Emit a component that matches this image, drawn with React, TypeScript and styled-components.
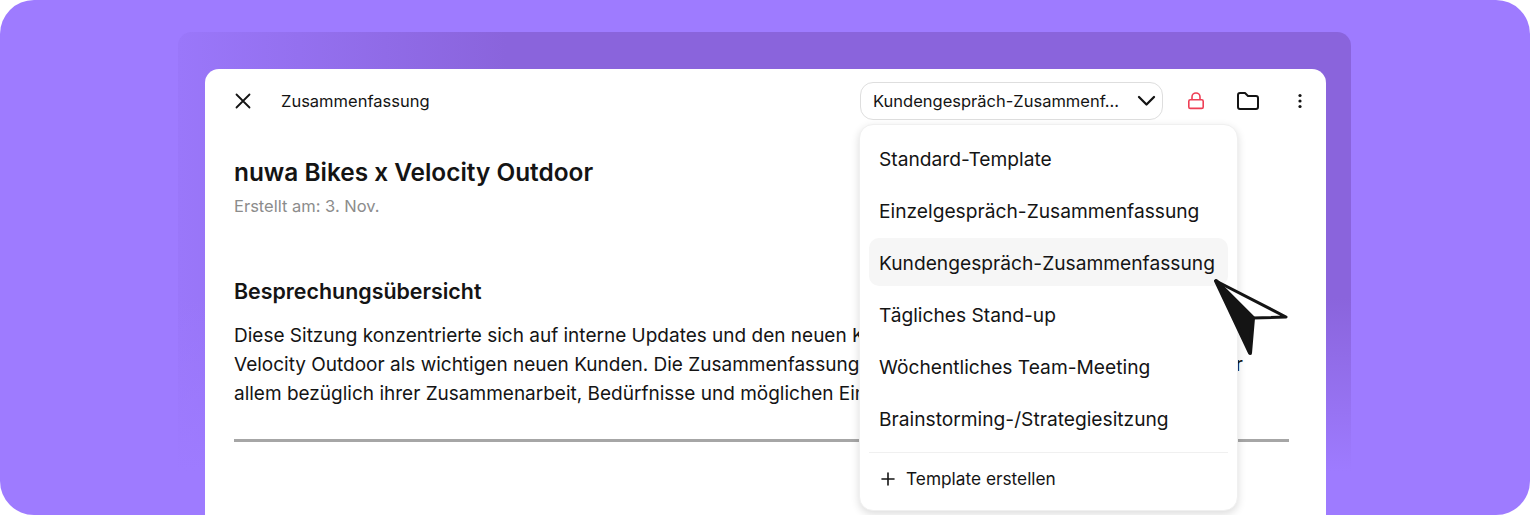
import React from 'react';
import styled, { createGlobalStyle } from 'styled-components';

const GlobalStyle = createGlobalStyle`
    html, body {
        margin: 0;
        padding: 0;
        background: #fff;
    }
    body {
        font-family: 'Inter', 'Liberation Sans', sans-serif;
        color: #141414;
        overflow: hidden;
    }
`;

const templates = [
    'Standard-Template',
    'Einzelgespräch-Zusammenfassung',
    'Kundengespräch-Zusammenfassung',
    'Tägliches Stand-up',
    'Wöchentliches Team-Meeting',
    'Brainstorming-/Strategiesitzung',
];

const App = () => {
    return (
        <>
            <GlobalStyle />
            <Stage>
                <Halo>
                    <Sheet>
                        <TopBar>
                            <CloseButton>
                                <svg width="18" height="18" viewBox="0 0 18 18" fill="none" stroke="#141414" strokeWidth="1.8" strokeLinecap="round">
                                    <path d="M2.5 2.5l13 13M15.5 2.5l-13 13" />
                                </svg>
                            </CloseButton>
                            <BarTitle>Zusammenfassung</BarTitle>
                            <Select>
                                <SelectText>Kundengespräch-Zusammenf…</SelectText>
                                <svg width="19" height="12" viewBox="0 0 19 12" fill="none" stroke="#141414" strokeWidth="2.3" strokeLinecap="round" strokeLinejoin="round">
                                    <path d="M2 2l7.5 7.5L17 2" />
                                </svg>
                            </Select>
                            <IconSlot>
                                <svg width="18" height="18" viewBox="0 0 18 18" fill="none" stroke="#ee3f55" strokeWidth="1.6" strokeLinejoin="round">
                                    <rect x="1.8" y="7.8" width="14.4" height="8.6" rx="1.5" />
                                    <path d="M5 7.8V5a4 4 0 0 1 8 0v2.8" />
                                </svg>
                            </IconSlot>
                            <IconSlot>
                                <svg width="24" height="20" viewBox="0 0 24 20" fill="none" stroke="#141414" strokeWidth="2" strokeLinejoin="round">
                                    <path d="M2 4a2 2 0 0 1 2-2h5l3 3h8a2 2 0 0 1 2 2v9a2 2 0 0 1-2 2H4a2 2 0 0 1-2-2z" />
                                </svg>
                            </IconSlot>
                            <IconSlot>
                                <svg width="4" height="16" viewBox="0 0 4 16" fill="#141414">
                                    <circle cx="2" cy="2.5" r="1.6" />
                                    <circle cx="2" cy="8" r="1.6" />
                                    <circle cx="2" cy="13.5" r="1.6" />
                                </svg>
                            </IconSlot>
                        </TopBar>
                        <Content>
                            <Heading>nuwa Bikes x Velocity Outdoor</Heading>
                            <Created>Erstellt am: 3. Nov.</Created>
                            <SectionTitle>Besprechungsübersicht</SectionTitle>
                            <Body>
                                Diese Sitzung konzentrierte sich auf interne Updates und den neuen Kunden nuwa Bikes sowie
                                <br />
                                Velocity Outdoor als wichtigen neuen Kunden. Die Zusammenfassung enthält jene Details zu beiden Kunden, vor
                                <br />
                                allem bezüglich ihrer Zusammenarbeit, Bedürfnisse und möglichen Einsatzbereiche im Team.
                            </Body>
                            <Rule />
                        </Content>
                        <Menu>
                            <MenuList>
                                {templates.map((name) => (
                                    <MenuItem key={name} $active={name === 'Kundengespräch-Zusammenfassung'}>
                                        {name}
                                    </MenuItem>
                                ))}
                            </MenuList>
                            <CreateRow>
                                <svg width="16" height="16" viewBox="0 0 16 16" fill="none" stroke="#141414" strokeWidth="1.6" strokeLinecap="round">
                                    <path d="M8 2v12M2 8h12" />
                                </svg>
                                Template erstellen
                            </CreateRow>
                        </Menu>
                        <Pointer>
                            <svg width="78" height="82" viewBox="0 0 78 82">
                                <path d="M4 4L74 40L41 41Z" fill="#fff" stroke="#141414" strokeWidth="3" strokeLinejoin="round" />
                                <path d="M4 4L41 41L38 76Z" fill="#141414" stroke="#141414" strokeWidth="4" strokeLinejoin="round" />
                            </svg>
                        </Pointer>
                    </Sheet>
                </Halo>
            </Stage>
        </>
    );
};

export default App;

const Stage = styled.div`
    width: 1530px;
    height: 515px;
    box-sizing: border-box;
    padding: 32px 179px 0 178px;
    background: #9e7bff;
    border-radius: 34px;
    overflow: hidden;
`;

const Halo = styled.div`
    height: 483px;
    box-sizing: border-box;
    padding: 37px 25px 0 27px;
    border-radius: 14px 14px 0 0;
    background:
        linear-gradient(to bottom, rgba(158, 123, 255, 0) 0%, rgba(158, 123, 255, 0) 55%, #9e7bff 91%),
        linear-gradient(to right, #9a77fa 0%, #8a64dc 28%, #8a64dc 100%);
`;

const Sheet = styled.div`
    position: relative;
    height: 446px;
    background: #fff;
    border-radius: 14px 14px 0 0;
`;

const TopBar = styled.div`
    display: flex;
    align-items: center;
    height: 64px;
    padding-left: 29px;
`;

const CloseButton = styled.div`
    display: flex;
    width: 18px;
    margin-right: 29px;
`;

const BarTitle = styled.span`
    flex: 1;
    font-size: 16.5px;
    line-height: 20px;
`;

const Select = styled.div`
    display: flex;
    align-items: center;
    justify-content: space-between;
    box-sizing: border-box;
    width: 303px;
    height: 38px;
    padding: 0 6px 0 12px;
    margin-right: 7px;
    border: 1px solid #dedede;
    border-radius: 13px;
`;

const SelectText = styled.span`
    font-size: 16.5px;
    line-height: 20px;
    white-space: nowrap;
`;

const IconSlot = styled.div`
    display: flex;
    align-items: center;
    justify-content: center;
    width: 52px;
    height: 38px;
`;

const Content = styled.div`
    padding: 21px 37px 0 29px;
`;

const Heading = styled.h1`
    margin: 0;
    font-size: 24.4px;
    line-height: 36px;
    font-weight: 600;
`;

const Created = styled.div`
    margin-top: 6px;
    font-size: 16.5px;
    line-height: 20px;
    color: #8c8c8c;
`;

const SectionTitle = styled.h2`
    margin: 61px 0 0;
    font-size: 21.4px;
    line-height: 28px;
    font-weight: 600;
`;

const Body = styled.p`
    margin: 16px 0 0;
    font-size: 19px;
    line-height: 29px;
    white-space: nowrap;
`;

const Rule = styled.div`
    height: 3px;
    margin-top: 31px;
    background: #a6a6a6;
`;

const Menu = styled.div`
    position: absolute;
    left: 654px;
    top: 55px;
    width: 379px;
    box-sizing: border-box;
    background: #fff;
    border: 1px solid #f0f0f0;
    border-radius: 14px;
    box-shadow: 0 3px 8px rgba(0, 0, 0, 0.14);
`;

const MenuList = styled.div`
    display: flex;
    flex-direction: column;
    gap: 4px;
    padding: 9px 9px 0;
`;

const MenuItem = styled.div<{ $active?: boolean }>`
    box-sizing: border-box;
    height: 48px;
    padding: 1px 10px 0;
    border-radius: 10px;
    font-size: 19.2px;
    line-height: 48px;
    white-space: nowrap;
    background: ${(p) => (p.$active ? '#f6f6f6' : 'transparent')};
`;

const CreateRow = styled.div`
    display: flex;
    align-items: center;
    gap: 10px;
    height: 58px;
    margin: 10px 9px 0;
    padding: 0 11px 6px;
    box-sizing: border-box;
    border-top: 1px solid #f0f0f0;
    font-size: 17.3px;
`;

const Pointer = styled.div`
    position: absolute;
    left: 1007px;
    top: 208px;
    display: flex;
`;
